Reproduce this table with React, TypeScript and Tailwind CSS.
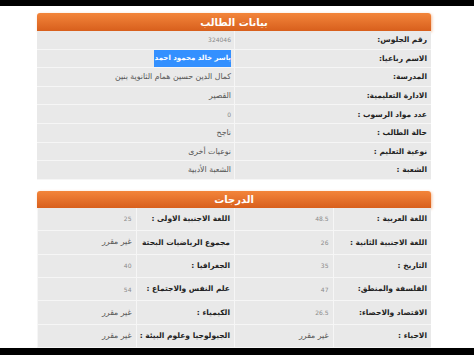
import React from 'react';

const info: [string, React.ReactNode][] = [
  ['رقم الجلوس:', '324046'],
  ['الاسم رباعيا:', <span className="bg-[#3390ff] text-white font-bold text-[7px] pl-[1px] py-[3px]">ياسر خالد محمود احمد</span>],
  ['المدرسة:', 'كمال الدين حسين همام الثانوية بنين'],
  ['الادارة التعليمية:', 'القصير'],
  ['عدد مواد الرسوب :', '0'],
  ['حالة الطالب :', 'ناجح'],
  ['نوعية التعليم :', 'نوعيات أخرى'],
  ['الشعبة :', 'الشعبة الأدبية'],
];

const grades: [string, string, string, string][] = [
  ['اللغة العربية :', '48.5', 'اللغة الاجنبية الاولى :', '25'],
  ['اللغة الاجنبية الثانية :', '26', 'مجموع الرياضيات البحتة', 'غير مقرر'],
  ['التاريخ :', '35', 'الجغرافيا :', '40'],
  ['الفلسفة والمنطق:', '47', 'علم النفس والاجتماع :', '54'],
  ['الاقتصاد والاحصاء:', '26.5', 'الكيمياء :', 'غير مقرر'],
  ['الاحياء :', 'غير مقرر', 'الجيولوجيا وعلوم البيئة :', 'غير مقرر'],
];

const isNum = (v: React.ReactNode) => typeof v === 'string' && /^[0-9.]+$/.test(v);

// قيمة: الأرقام بخط أصغر وأفتح
const valueCls = (v: React.ReactNode) =>
  isNum(v) ? 'text-[6px] text-[#8a8a8a]' : 'text-[7.8px] text-[#555]';

// شريط العنوان البرتقالي
const Header = ({ title, h }: { title: string; h: string }) => (
  <div className={`${h} flex items-center justify-center rounded-t-[3px] bg-gradient-to-b from-[#f3853a] to-[#d85f1c] text-white font-bold text-[10px] shadow-[1px_1px_3px_rgba(230,110,30,0.45)]`}>
    {title}
  </div>
);

export default function App() {
  return (
    <div dir="rtl" className="w-[474px] h-[355px] flex flex-col bg-white overflow-hidden" style={{ fontFamily: '"DejaVu Sans", sans-serif' }}>
      <div className="h-[6px] bg-black shrink-0" />
      <div className="flex-1 overflow-hidden">
        <div className="w-[394px] mr-[43px] mt-[7px]">
          <Header title="بيانات الطالب" h="h-[18px]" />
          <div className="bg-[#e9e9e9]">
            {info.map(([label, value], i) => (
              <div key={i} className="h-[18.6px] grid grid-cols-2 border-b border-[#f6f6f6]">
                <div className="flex items-center pr-[4px] text-[7.5px] font-bold text-[#222] border-l border-[#f6f6f6] whitespace-nowrap">{label}</div>
                <div className={`flex items-center pr-[3px] whitespace-nowrap ${valueCls(value)}`}>{value}</div>
              </div>
            ))}
          </div>

          <div className="mt-[11px]">
            <Header title="الدرجات" h="h-[17px]" />
            <div className="bg-[#e9e9e9]">
              {grades.map((row, i) => (
                <div key={i} className="h-[23.4px] grid grid-cols-4 border-b border-[#f6f6f6]">
                  {row.map((cell, j) => (
                    <div
                      key={j}
                      className={
                        j % 2 === 0
                          ? 'flex items-center pr-[4px] text-[7.5px] font-bold text-[#222] border-l border-[#f6f6f6] whitespace-nowrap'
                          : `flex items-center pr-[4px] border-l border-[#f6f6f6] whitespace-nowrap ${valueCls(cell)}`
                      }
                    >
                      {cell}
                    </div>
                  ))}
                </div>
              ))}
            </div>
          </div>
        </div>
      </div>
      <div className="h-[7px] bg-black shrink-0" />
    </div>
  );
}
